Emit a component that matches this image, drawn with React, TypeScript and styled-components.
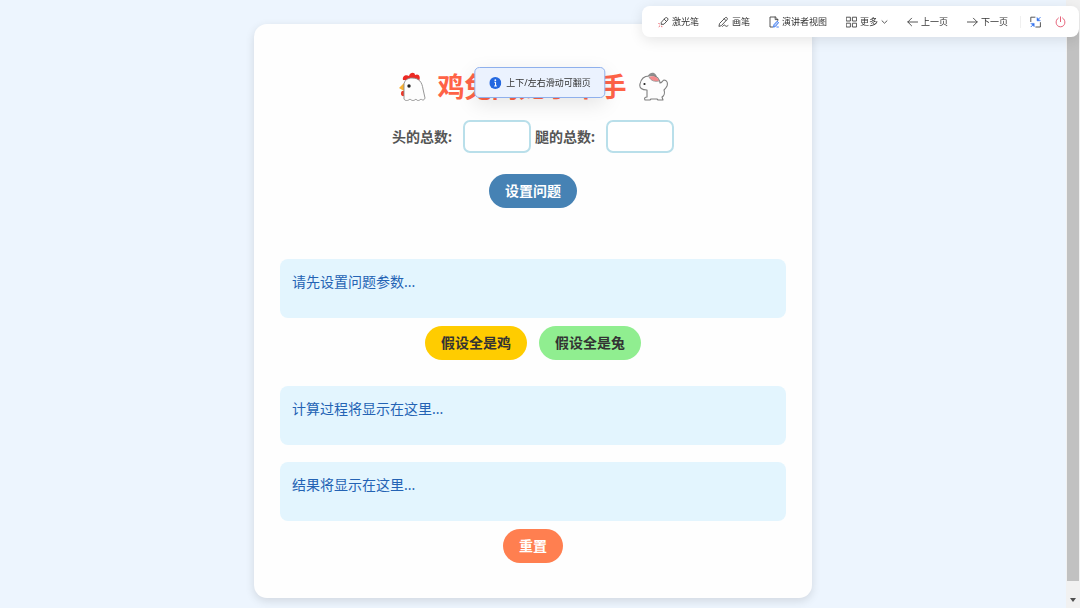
import React, { useState } from "react";
import styled, { createGlobalStyle } from "styled-components";

const GlobalStyle = createGlobalStyle`
  * { box-sizing: border-box; }
  body {
    margin: 0;
    background: #edf5fe;
    font-family: "Noto Sans", "Noto Sans CJK SC", sans-serif;
    overflow: hidden;
  }
  button, input { font: inherit; }
`;

const Page = styled.div`
  display: flex;
  min-height: 100vh;
`;

const Main = styled.main`
  flex: 1;
  padding: 24px 20px 10px;
`;

const Card = styled.section`
  display: flex;
  flex-direction: column;
  align-items: center;
  max-width: 558px;
  margin: 0 auto;
  padding: 46px 26px 35px;
  border-radius: 13px;
  background: #fefefe;
  box-shadow: 0 3px 10px rgba(0, 0, 0, 0.12);
`;

const Title = styled.h1`
  display: flex;
  align-items: center;
  gap: 12px;
  margin: 0 0 16px;
  color: #ff6347;
  font-size: 27px;
  line-height: 34px;
  font-weight: 700;
`;

const Fields = styled.form`
  display: flex;
  flex-wrap: wrap;
  justify-content: center;
  column-gap: 4px;
  row-gap: 21px;
  width: 100%;
`;

const Field = styled.label`
  display: flex;
  align-items: center;
  gap: 11px;
  color: #555;
  font-size: 14px;
  line-height: 20px;
  font-weight: 700;
`;

const NumberInput = styled.input`
  width: 68px;
  height: 33px;
  padding: 0 8px;
  border: 2px solid #b9dfea;
  border-radius: 7px;
  background: #fff;
  font-size: 14px;
`;

const ButtonRow = styled.div`
  display: flex;
  justify-content: center;
  gap: 12px;
  width: 100%;
`;

const PillButton = styled.button<{ $bg: string; $fg: string }>`
  height: 34px;
  padding: 0 16px;
  border: 0;
  border-radius: 17px;
  background: ${(p) => p.$bg};
  color: ${(p) => p.$fg};
  font-size: 14px;
  line-height: 20px;
  font-weight: 700;
  cursor: pointer;
`;

const Panel = styled.div<{ $before: number }>`
  width: 100%;
  min-height: 59px;
  margin: ${(p) => p.$before}px 0 8px;
  padding: 12px;
  border-radius: 8px;
  background: #e3f5fe;
  color: #2463b4;
  font-size: 14px;
  line-height: 21px;
`;

const Toolbar = styled.nav`
  position: fixed;
  top: 6px;
  right: 1px;
  display: flex;
  align-items: center;
  height: 31px;
  padding: 0 13px 0 16px;
  border-radius: 8px;
  background: #fff;
  box-shadow: 0 3px 14px rgba(0, 0, 0, 0.1);
`;

const Tools = styled.div`
  display: flex;
  gap: 19px;
`;

const Tool = styled.button`
  display: flex;
  align-items: center;
  gap: 3px;
  padding: 0;
  border: 0;
  background: none;
  color: #333;
  font-size: 9px;
  line-height: 14px;
  white-space: nowrap;
  cursor: pointer;
`;

const WindowTools = styled.div`
  display: flex;
  gap: 14px;
  margin-left: 12px;
  padding-left: 9px;
  border-left: 1px solid #f0f0f0;
`;

const Toast = styled.div`
  position: fixed;
  top: 67px;
  left: 50%;
  transform: translateX(-50%);
  display: flex;
  align-items: center;
  gap: 5px;
  height: 31px;
  padding: 0 14px;
  border: 1px solid #8fb0ec;
  border-radius: 5px;
  background: #ebf2fe;
  box-shadow: 0 6px 20px rgba(0, 0, 0, 0.1);
  color: #333;
  font-size: 9px;
  line-height: 14px;
  white-space: nowrap;
`;

const ScrollTrack = styled.div`
  display: flex;
  flex-direction: column;
  width: 14px;
  height: 100vh;
  padding: 0 1px;
  background: #f1f1f1;
`;

const ScrollThumb = styled.div`
  flex: 1;
  margin-top: 14px;
  background: #c1c1c1;
`;

const ScrollEnd = styled.div`
  display: flex;
  justify-content: center;
  height: 27px;
  padding-top: 17px;
`;

const Icon = ({ children, w = 11 }: { children: React.ReactNode; w?: number }) => (
  <svg width={w} height="12" viewBox={`0 0 ${w} 12`} fill="none" stroke="#444" strokeWidth="0.9" strokeLinecap="round" strokeLinejoin="round" aria-hidden="true">
    {children}
  </svg>
);

const Chicken = () => (
  <svg width="27" height="30" viewBox="0 0 27 30" aria-hidden="true">
    <path d="M4 8C3 4 7 2 10 4C11 0 16 0 16 3C20 1 22 5 20 9Z" fill="#ec2a24" />
    <path d="M5 11L0 16L5 19Z" fill="#f9b233" />
    <path d="M3 19C1 21 2 25 5 24L6 19Z" fill="#ec3a2c" />
    <path d="M5 27V13C5 8 9 6 13 6C20 6 23 10 24 17L26 26C25 29 23 28 22 27C20 29 18 29 17 27C15 29 13 29 11 27C9 29 6 29 5 27Z" fill="#fdfdfd" stroke="#8b8b8b" strokeWidth="0.9" />
    <circle cx="10" cy="14" r="1.7" fill="#222" />
  </svg>
);

const Rabbit = () => (
  <svg width="29" height="30" viewBox="0 0 29 30" aria-hidden="true">
    <path d="M8 5C10 1 13 0 15 1C17 2 18 4 18 6Z" fill="#8e8e8e" />
    <path d="M1 12C2 7 5 4 10 4C15 3 19 5 20 8C21 9 21 10 21 11C23 11 23 9 25 8C28 8 29 11 28 14C27 16 26 17 25 18C26 21 25 24 23 25L24 28H19L18 27H12L11 28H6C5 26 6 25 8 25V18C3 18 0 16 1 12Z" fill="#fdfdfd" stroke="#7f7f7f" strokeWidth="1.1" strokeLinejoin="round" />
    <path d="M10 5C14 3 19 5 20 9C16 10 12 9 10 5Z" fill="#f58a8c" />
    <path d="M10 5C12 9 16 10 20 9" fill="none" stroke="#8a8a8a" strokeWidth="0.7" />
    <circle cx="5.5" cy="12" r="1.1" fill="#222" />
  </svg>
);

export default function App() {
  const [heads, setHeads] = useState("");
  const [legs, setLegs] = useState("");

  return (
    <>
      <GlobalStyle />
      <Page>
        <Main>
          <Card>
            <Title>
              <Chicken />
              鸡兔同笼小帮手
              <Rabbit />
            </Title>
            <Fields onSubmit={(e) => e.preventDefault()}>
              <Field>
                头的总数:
                <NumberInput inputMode="numeric" value={heads} onChange={(e) => setHeads(e.target.value)} />
              </Field>
              <Field>
                腿的总数:
                <NumberInput inputMode="numeric" value={legs} onChange={(e) => setLegs(e.target.value)} />
              </Field>
              <ButtonRow>
                <PillButton $bg="#4682b4" $fg="#fff">设置问题</PillButton>
              </ButtonRow>
            </Fields>
            <Panel $before={51}>请先设置问题参数...</Panel>
            <ButtonRow>
              <PillButton type="button" $bg="#ffcc00" $fg="#333">假设全是鸡</PillButton>
              <PillButton type="button" $bg="#90ee90" $fg="#333">假设全是兔</PillButton>
            </ButtonRow>
            <Panel $before={26}>计算过程将显示在这里...</Panel>
            <Panel $before={9}>结果将显示在这里...</Panel>
            <PillButton type="button" $bg="#ff7f50" $fg="#fff">重置</PillButton>
          </Card>
        </Main>
        <ScrollTrack aria-hidden="true">
          <ScrollThumb />
          <ScrollEnd>
            <svg width="6" height="4" viewBox="0 0 6 4"><path d="M0 0H6L3 4Z" fill="#505050" /></svg>
          </ScrollEnd>
        </ScrollTrack>
      </Page>

      <Toast role="status">
        <svg width="12" height="12" viewBox="0 0 12 12" aria-hidden="true">
          <circle cx="6" cy="6" r="6" fill="#2468e0" />
          <circle cx="6" cy="3.2" r="0.9" fill="#fff" />
          <path d="M5 5.2H6.2V9M4.8 9H7.6" stroke="#fff" strokeWidth="1.1" fill="none" />
        </svg>
        上下/左右滑动可翻页
      </Toast>

      <Toolbar>
        <Tools>
          <Tool>
            <Icon>
              <path d="M3.6 6L7.4 1.8C8.6 0.8 10.8 2.8 9.8 4L6 8.2L3.6 8.4Z" />
              <path d="M6.2 3.2L8.4 5.4" />
              <path d="M0.8 7.6L1.4 7.8M1 10.6L1.8 9.9M3.8 10.8L3.7 10.2" stroke="#e8505b" />
            </Icon>
            激光笔
          </Tool>
          <Tool>
            <Icon>
              <path d="M1 10L1.6 7.4L7.4 1.6C8.4 0.8 10 2.4 9.2 3.4L3.6 9.4Z" />
              <path d="M6.2 2.8L8 4.6M4.6 10.4C6 8.6 7 8.6 7.2 9.6C7.6 10.8 8.8 10.4 10 9.6" />
            </Icon>
            画笔
          </Tool>
          <Tool>
            <Icon w={10}>
              <path d="M3.6 11H1V1H6.4L8.8 3.4V4.4M6.2 1V3.6H8.8" />
              <path d="M4.6 10.8L5 8.6L8.2 5.2L9.6 6.6L6.6 10.2ZM7.8 11H9.4" stroke="#2f6fed" fill="#bcd2fa" />
            </Icon>
            演讲者视图
          </Tool>
          <Tool>
            <Icon>
              <path d="M0.6 1.2H4.4V5H0.6ZM6.8 1.2H10.6V5H6.8ZM0.6 7.2H4.4V11H0.6ZM6.8 7.2H10.6V11H6.8Z" strokeLinejoin="miter" />
            </Icon>
            更多
            <Icon w={7}>
              <path d="M1 4.8L3.5 7.2L6 4.8" />
            </Icon>
          </Tool>
          <Tool>
            <Icon>
              <path d="M10.6 6H0.8M4.6 2.2L0.8 6L4.6 9.8" />
            </Icon>
            上一页
          </Tool>
          <Tool>
            <Icon>
              <path d="M0.4 6H10.2M6.4 2.2L10.2 6L6.4 9.8" />
            </Icon>
            下一页
          </Tool>
        </Tools>
        <WindowTools>
          <Tool aria-label="退出全屏">
            <Icon>
              <path d="M5 1.2H0.8V5.6M5.8 11H10.4V6.6" />
              <path d="M10.2 1.4L8.4 3.2M1 10.8L2.8 9" stroke="#2f6fed" />
              <path d="M7 1.8V4.8H10ZM1.2 7.4H4.2V10.4Z" fill="#2f6fed" stroke="#2f6fed" strokeWidth="0.5" />
            </Icon>
          </Tool>
          <Tool aria-label="关闭">
            <Icon>
              <path d="M3.4 2C-0.6 4.4 0.8 10.8 5.5 10.8C10.2 10.8 11.6 4.4 7.6 2M5.5 0.8V5.6" stroke="#e2506a" />
            </Icon>
          </Tool>
        </WindowTools>
      </Toolbar>
    </>
  );
}
